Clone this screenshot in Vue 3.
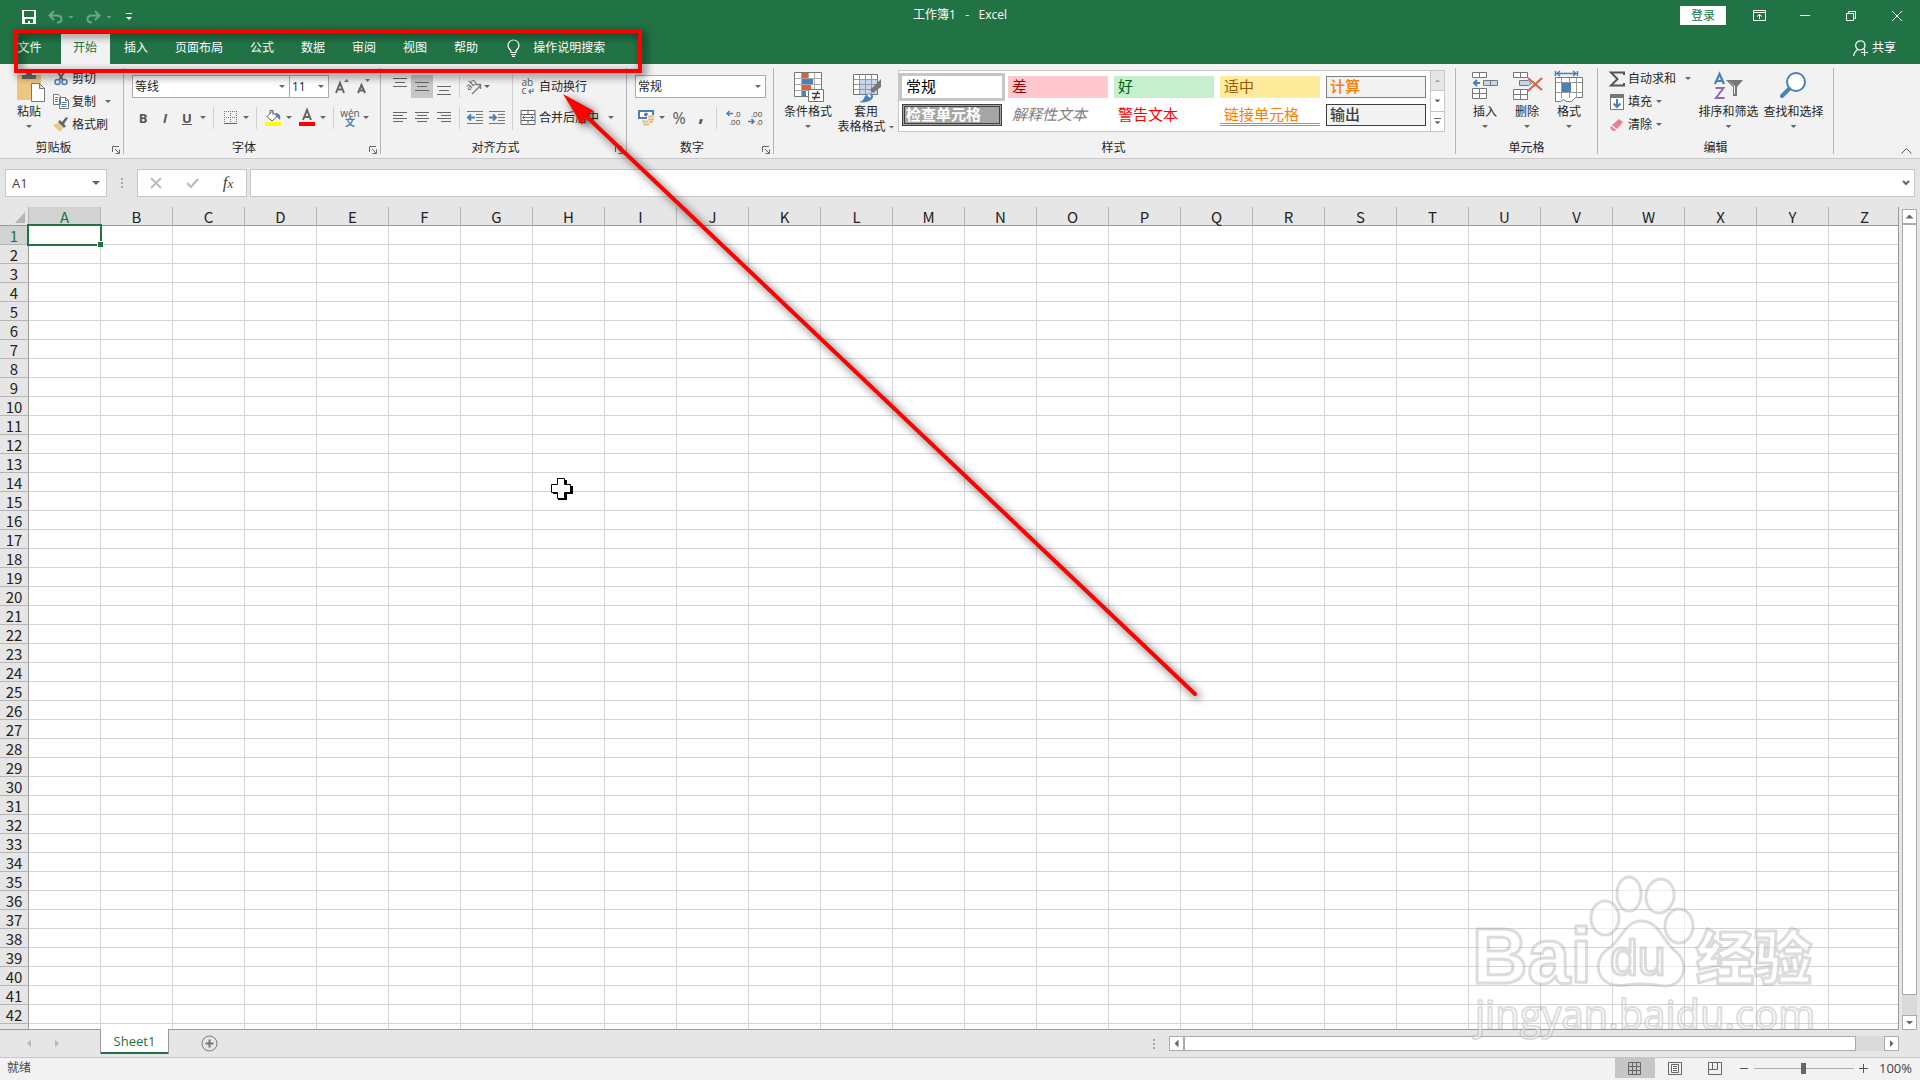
<script setup>
import { ref } from 'vue'

const tabs = ['文件', '开始', '插入', '页面布局', '公式', '数据', '审阅', '视图', '帮助']
const columns = 'ABCDEFGHIJKLMNOPQRSTUVWXYZ'.split('')
const rows = Array.from({ length: 43 }, (_, i) => i + 1)
const cellStyles = [
  { text: '常规', kind: 'normal' },
  { text: '差', kind: 'bad' },
  { text: '好', kind: 'good' },
  { text: '适中', kind: 'neutral' },
  { text: '计算', kind: 'calc' },
  { text: '检查单元格', kind: 'check' },
  { text: '解释性文本', kind: 'explain' },
  { text: '警告文本', kind: 'warn' },
  { text: '链接单元格', kind: 'linked' },
  { text: '输出', kind: 'output' }
]
const activeTab = ref('开始')
const cellName = ref('A1')
const formula = ref('')
const zoom = ref(50)
</script>

<template>
  <div class="app">
    <header class="top">
      <div class="titlebar">
        <div class="quick">
          <button class="qbtn" aria-label="保存">
            <svg width="14" height="14" viewBox="0 0 14 14"><path fill="#fff" fill-rule="evenodd" d="M0 0h14v14H0zM2 1v6h10V1zM3 9v4h3v-2h2v2h3V9z" /></svg>
          </button>
          <button class="qbtn dim" aria-label="撤消">
            <svg width="15" height="14" viewBox="0 0 15 14"><path fill="none" stroke="#fff" stroke-width="2" d="M6 1 1.500 5.500 6 10M2 5.500h7c6 0 6 7 0 7" /></svg>
            <i class="caret light"></i>
          </button>
          <button class="qbtn dim" aria-label="恢复">
            <svg width="15" height="14" viewBox="0 0 15 14"><path fill="none" stroke="#fff" stroke-width="2" d="M9 1l4.500 4.500L9 10M13 5.500H6c-6 0-6 7 0 7" /></svg>
            <i class="caret light"></i>
          </button>
          <button class="qbtn last" aria-label="自定义快速访问工具栏">
            <svg width="6" height="8" viewBox="0 0 6 8"><path fill="#fff" d="M0 0h6v1H0zM0 4h6L3 7z" /></svg>
          </button>
        </div>
        <h1 class="title">工作簿1&nbsp;&nbsp; -&nbsp;&nbsp; Excel</h1>
        <div class="window">
          <button class="login">登录</button>
          <button class="wbtn" aria-label="功能区显示选项">
            <svg width="13" height="11" viewBox="0 0 13 11"><path fill="none" stroke="#fff" d="M.5.5h12v10H.5zM.5 2.500h12M6.500 9V4.500M4 6.500l2.500-2 2.500 2" /></svg>
          </button>
          <button class="wbtn" aria-label="最小化">
            <svg width="10" height="2" viewBox="0 0 10 2"><path fill="#fff" d="M0 0h10v1H0z" /></svg>
          </button>
          <button class="wbtn" aria-label="向下还原">
            <svg width="10" height="10" viewBox="0 0 10 10"><path fill="none" stroke="#fff" d="M.5 2.500h7v7h-7zM2.500 2.500v-2h7v7h-2" /></svg>
          </button>
          <button class="wbtn" aria-label="关闭">
            <svg width="10" height="10" viewBox="0 0 10 10"><path fill="none" stroke="#fff" d="M0 0l10 10M10 0 0 10" /></svg>
          </button>
        </div>
      </div>

      <nav class="tabs">
        <button
          v-for="tab in tabs"
          :key="tab"
          class="tab"
          :class="{ active: tab === activeTab, file: tab === '文件' }"
          @click="activeTab = tab"
        >{{ tab }}</button>
        <button class="tell">
          <svg width="13" height="17" viewBox="0 0 13 17"><path fill="none" stroke="#fff" stroke-width="1.200" d="M4 12.500V11C3 9 1 8.500 1 5.500a5 5 0 0 1 11 0C12 8.500 10 9 9 11v1.500zM4 14.500h5M5 16.300h3" /></svg>
          操作说明搜索
        </button>
        <button class="share">
          <svg width="15" height="16" viewBox="0 0 15 16"><path fill="none" stroke="#fff" stroke-width="1.200" d="M7 .8a4.500 4.500 0 0 1 2 8.700L7.500 10A4.600 4.600 0 0 1 7 .8zM5 9.500C2.500 11 1 13 .7 16M11.500 9v7M8 12.500h7" /></svg>
          共享
        </button>
      </nav>
    </header>

    <section class="ribbon">
      <div class="group clipboard">
        <div class="body">
          <button class="big">
            <svg width="32" height="32" viewBox="0 0 32 32">
              <path fill="#eec77f" d="M4 4h24v25H4z" /><path fill="#6a6a6a" d="M9 8V4h4c0-5 6-5 6 0h4v4z" />
              <path fill="#fff" stroke="#777" d="M18.500 12.500h8l5 5v13h-13zM26.500 12.500v5h5" />
            </svg>
            <span>粘贴</span><i class="caret"></i>
          </button>
          <div class="stack">
            <button class="small">
              <svg width="14" height="15" viewBox="0 0 14 15"><path fill="none" stroke="#666" stroke-width="2" d="M3 0l6 9M11 0L5 9" /><g fill="none" stroke="#4a80b8" stroke-width="1.500"><circle cx="3.500" cy="11" r="2.500" /><circle cx="10.500" cy="11" r="2.500" /></g></svg>
              剪切
            </button>
            <button class="small">
              <svg width="16" height="15" viewBox="0 0 16 15"><path fill="#fff" stroke="#777" d="M.5.5h5l2 2v8h-7zM6.500 3.500h6l3 3v8h-9zM12.500 3.500v3h3" /><path stroke="#4a80b8" d="M2 3.500h3M2 5.500h3M2 7.500h3M8.500 8.500h5M8.500 10.500h5M8.500 12.500h5" /></svg>
              复制<i class="caret far"></i>
            </button>
            <button class="small">
              <svg width="16" height="15" viewBox="0 0 16 15"><path fill="#eec77f" d="M0 8l5-2 5 5-3 4z" /><path fill="#666" d="M5 5l2-2 6 6-2 2zM9 5l4-5 2 1-4 6z" /></svg>
              格式刷
            </button>
          </div>
        </div>
        <div class="label launch">剪贴板<button class="launcher" aria-label="剪贴板设置"><svg width="8" height="8" viewBox="0 0 8 8"><path fill="none" stroke="#666" d="M.5 6V.5H7M3 3l4 4M7.500 3.500v4h-4" /></svg></button></div>
      </div>

      <div class="group font">
        <div class="body lines">
          <div class="row">
            <label class="select family"><select aria-label="字体"><option>等线</option></select><i class="caret"></i></label>
            <label class="select size"><select aria-label="字号"><option>11</option></select><i class="caret"></i></label>
            <button class="tool grow" aria-label="增大字号"><svg width="14" height="15" viewBox="0 0 14 15"><path fill="none" stroke="#666" stroke-width="2" d="M1 14l4-10 4 10M3 10.500h4" /><path fill="#4a80b8" d="M9 3h5l-2.500-3z" /></svg></button>
            <button class="tool" aria-label="减小字号"><svg width="14" height="15" viewBox="0 0 14 15"><path fill="none" stroke="#666" stroke-width="2" d="M1 14l3.500-8L8 14M3 11.500h4" /><path fill="#4a80b8" d="M8 0h5l-2.500 3z" /></svg></button>
          </div>
          <div class="row">
            <button class="tool"><b>B</b></button>
            <button class="tool"><b><em>I</em></b></button>
            <button class="tool"><b><u>U</u></b></button><button class="drop" aria-label="下划线选项"><i class="caret"></i></button>
            <i class="sep"></i>
            <button class="tool" aria-label="边框"><svg width="13" height="14" viewBox="0 0 13 14"><path fill="none" stroke="#777" stroke-dasharray="1 1" d="M.5 0v12M6.500 0v12M12.500 0v12M0 .5h13M0 6.500h13" /><path fill="#666" d="M0 12h13v1H0z" /></svg></button><button class="drop" aria-label="边框选项"><i class="caret"></i></button>
            <i class="sep"></i>
            <button class="tool" aria-label="填充颜色"><svg width="16" height="17" viewBox="0 0 16 17"><path fill="#fff" stroke="#666" d="M7 2.500l5 5-5 4.500-5-4.500zM5 5V1.500h3V6" /><path fill="#4a80b8" d="M10 4c4 0 6 2 5 7l-3-3z" /><path fill="#ff0" d="M0 13h16v4H0z" /></svg></button><button class="drop" aria-label="填充颜色选项"><i class="caret"></i></button>
            <button class="tool fore" aria-label="字体颜色"><svg width="16" height="17" viewBox="0 0 16 17"><path fill="none" stroke="#666" stroke-width="2" d="M4 11L8 1l4 10M5.500 8h5" /><path fill="red" d="M0 13h16v4H0z" /></svg></button><button class="drop" aria-label="字体颜色选项"><i class="caret"></i></button>
            <i class="sep"></i>
            <button class="tool pinyin"><span>wén</span><span class="wen">文</span></button><button class="drop" aria-label="拼音选项"><i class="caret"></i></button>
          </div>
        </div>
        <div class="label launch">字体<button class="launcher" aria-label="字体设置"><svg width="8" height="8" viewBox="0 0 8 8"><path fill="none" stroke="#666" d="M.5 6V.5H7M3 3l4 4M7.500 3.500v4h-4" /></svg></button></div>
      </div>

      <div class="group align">
        <div class="body">
          <div class="lines">
            <div class="row">
              <button class="tool" aria-label="顶端对齐"><svg width="14" height="17" viewBox="0 0 14 17"><path stroke="#666" d="M0 .5h14M2 4.500h10M0 8.500h14" /></svg></button>
              <button class="tool on" aria-label="垂直居中"><svg width="14" height="9" viewBox="0 0 14 9"><path stroke="#666" d="M0 .5h14M2 4.500h10M0 8.500h14" /></svg></button>
              <button class="tool" aria-label="底端对齐"><svg width="14" height="17" viewBox="0 0 14 17"><path stroke="#666" d="M0 8.500h14M2 12.500h10M0 16.500h14" /></svg></button>
              <i class="sep"></i>
              <button class="tool slim" aria-label="方向"><svg width="17" height="16" viewBox="0 0 17 16"><text x="4" y="12" transform="rotate(-45 4 12)" class="glyph">ab</text><path fill="none" stroke="#777" stroke-width="1.300" d="M7 15l8-8M11 5.500h4.500V10" /></svg></button><button class="drop" aria-label="方向选项"><i class="caret"></i></button>
            </div>
            <div class="row">
              <button class="tool" aria-label="左对齐"><svg width="14" height="11" viewBox="0 0 14 11"><path stroke="#666" d="M0 .5h14M0 3.500h10M0 6.500h14M0 9.500h10" /></svg></button>
              <button class="tool" aria-label="居中"><svg width="14" height="11" viewBox="0 0 14 11"><path stroke="#666" d="M0 .5h14M2 3.500h10M0 6.500h14M2 9.500h10" /></svg></button>
              <button class="tool" aria-label="右对齐"><svg width="14" height="11" viewBox="0 0 14 11"><path stroke="#666" d="M0 .5h14M4 3.500h10M0 6.500h14M4 9.500h10" /></svg></button>
              <i class="sep"></i>
              <button class="tool" aria-label="减少缩进量"><svg width="16" height="13" viewBox="0 0 16 13"><path stroke="#777" d="M0 .5h16M9 3.500h7M9 6.500h7M9 9.500h7M0 12.500h16" /><path fill="none" stroke="#4a80b8" stroke-width="2" d="M8 6.500H1.500M4 3.500l-3 3 3 3" /></svg></button>
              <button class="tool" aria-label="增加缩进量"><svg width="16" height="13" viewBox="0 0 16 13"><path stroke="#777" d="M0 .5h16M9 3.500h7M9 6.500h7M9 9.500h7M0 12.500h16" /><path fill="none" stroke="#4a80b8" stroke-width="2" d="M0 6.500h6.500M4 3.500l3 3-3 3" /></svg></button>
            </div>
          </div>
          <i class="sep tall"></i>
          <div class="lines">
            <button class="small">
              <svg width="13" height="16" viewBox="0 0 13 16"><text x="0" y="7" class="glyph">ab</text><text x="0" y="15" class="glyph">c</text><path fill="none" stroke="#4a80b8" stroke-width="1.200" d="M11.500 9.500v3H8M9.500 10.500l-2 2 2 2" /></svg>
              自动换行
            </button>
            <button class="small">
              <svg width="15" height="15" viewBox="0 0 15 15"><path fill="#fff" stroke="#666" d="M.5.5h14v14H.5zM.5 4.500h14M.5 10.500h14M7.500.5v4M7.500 10.500v4" /><path fill="none" stroke="#4a80b8" d="M2 7.500h11M4 5.500l-2 2 2 2M11 5.500l2 2-2 2" /></svg>
              合并后居中<i class="caret far"></i>
            </button>
          </div>
        </div>
        <div class="label launch">对齐方式<button class="launcher" aria-label="对齐设置"><svg width="8" height="8" viewBox="0 0 8 8"><path fill="none" stroke="#666" d="M.5 6V.5H7M3 3l4 4M7.500 3.500v4h-4" /></svg></button></div>
      </div>

      <div class="group number">
        <div class="body lines">
          <div class="row">
            <label class="select format"><select aria-label="数字格式"><option>常规</option></select><i class="caret"></i></label>
          </div>
          <div class="row">
            <button class="tool" aria-label="会计数字格式"><svg width="16" height="17" viewBox="0 0 16 17"><path fill="#fff" stroke="#4a80b8" stroke-width="2" d="M1 2h14v7H1z" /><circle cx="8" cy="5.500" r="2" fill="#4a80b8" /><path fill="#f2f2f2" d="M9 6h7v6H9zM4 11h7v5H4z" /><path stroke="#e8bd7a" stroke-width="1.800" d="M10 7.500h6M10 10.500h6M4 12.500h6M5 15.500h6M11 13h4" /></svg></button><button class="drop" aria-label="会计格式选项"><i class="caret"></i></button>
            <button class="tool percent">%</button>
            <button class="tool comma"><b>,</b></button>
            <i class="sep"></i>
            <button class="tool" aria-label="增加小数位数"><svg width="15" height="15" viewBox="0 0 15 15"><path fill="none" stroke="#4a80b8" stroke-width="1.500" d="M7 3.500H1M3.500 1L1 3.500 3.500 6" /><text x="8" y="7" class="digits">.0</text><text x="3" y="15" class="digits">.00</text></svg></button>
            <button class="tool" aria-label="减少小数位数"><svg width="15" height="15" viewBox="0 0 15 15"><path fill="none" stroke="#4a80b8" stroke-width="1.500" d="M0 11.500h6M3.500 9L6 11.500 3.500 14" /><text x="3" y="7" class="digits">.00</text><text x="8" y="15" class="digits">.0</text></svg></button>
          </div>
        </div>
        <div class="label launch">数字<button class="launcher" aria-label="数字设置"><svg width="8" height="8" viewBox="0 0 8 8"><path fill="none" stroke="#666" d="M.5 6V.5H7M3 3l4 4M7.500 3.500v4h-4" /></svg></button></div>
      </div>

      <div class="group styles">
        <div class="body">
          <button class="big cond">
            <svg width="32" height="32" viewBox="0 0 32 32">
              <path fill="#fff" stroke="#777" d="M2.500 1.500h27v24h-27z" /><path stroke="#aaa" d="M3 7.500h26M3 13.500h26M3 19.500h26M9.500 2v23M16.500 2v23M22.500 2v23" />
              <path fill="#d9603b" d="M10 2h6v5h-6zM10 14h9v5h-9z" /><path fill="#4a80b8" d="M10 8h11v5H10zM10 20h4v5h-4z" />
              <path fill="#fff" stroke="#777" d="M16.500 18.500h15v12h-15z" /><path stroke="#444" stroke-width="1.300" d="M20 22.500h8M20 26.500h8M26 20l-4 9" />
            </svg>
            <span>条件格式</span><i class="caret"></i>
          </button>
          <button class="big wide">
            <svg width="32" height="32" viewBox="0 0 32 32">
              <path fill="#fff" stroke="#777" d="M3.500 3.500h24v20h-24z" /><path fill="#c3d6ec" d="M10 9h17v14H10z" /><path stroke="#999" d="M4 8.500h23M4 13.500h23M4 18.500h23M9.500 4v19M15.500 4v19M21.500 4v19" />
              <path fill="#777" d="M31 8v8l-8 6-3-3z" /><path fill="#4a80b8" d="M9 31c6-1 4-5 8-8 6-2 8 3 4 6-3 2-8 3-12 2z" /><path fill="#fff" d="M17 24c3-2 5 1 3 3z" />
            </svg>
            <span>套用</span><span class="second">表格格式<i class="caret"></i></span>
          </button>
          <div class="gallery">
            <div class="swatches">
              <button v-for="s in cellStyles" :key="s.kind" class="swatch" :class="s.kind">{{ s.text }}</button>
            </div>
            <div class="pager">
              <button class="off" aria-label="上一行"><i class="caret up"></i></button>
              <button aria-label="下一行"><i class="caret"></i></button>
              <button class="more" aria-label="其他"><i class="caret"></i></button>
            </div>
          </div>
        </div>
        <div class="label">样式</div>
      </div>

      <div class="group cells">
        <div class="body">
          <button class="big">
            <svg width="32" height="32" viewBox="0 0 32 32"><path fill="#fff" stroke="#777" d="M3.500 1.500h14v5h-14zM10.500 1.500v5M3.500 17.500h14v10h-14zM3.500 22.500h14M10.500 17.500v10" /><path fill="#c3d6ec" stroke="#777" d="M14.500 9.500h14v5h-14zM21.500 9.500v5" /><path fill="none" stroke="#4a80b8" stroke-width="2" d="M11 12H5M8 9l-3 3 3 3" /></svg>
            <span>插入</span><i class="caret"></i>
          </button>
          <button class="big">
            <svg width="32" height="32" viewBox="0 0 32 32"><path fill="#fff" stroke="#777" d="M2.500 1.500h14v5h-14zM9.500 1.500v5M2.500 18.500h14v10h-14zM2.500 23.500h14M9.500 18.500v10" /><path fill="#c3d6ec" stroke="#777" d="M8.500 9.500h9l3 3-3 2h-9z" /><path fill="none" stroke="#d9603b" stroke-width="2" d="M17 7l14 12M31 7L17 20" /></svg>
            <span>删除</span><i class="caret"></i>
          </button>
          <button class="big">
            <svg width="32" height="32" viewBox="0 0 32 32"><path fill="none" stroke="#4a80b8" stroke-width="1.500" d="M2.500 0v5M24.500 0v5M4 2.500h19M7 0L4 2.500 7 5M20 0l3 2.500L20 5" /><path fill="#fff" stroke="#777" d="M2.500 6.500h27v20h-7l-4 4h-5l-3-2-3 2h-5z" /><path stroke="#999" d="M3 11.500h26M3 21.500h26M8.500 7v20M16.500 7v20M23.500 7v20" /><path fill="#4a80b8" d="M9 12h9v9H9z" /></svg>
            <span>格式</span><i class="caret"></i>
          </button>
        </div>
        <div class="label">单元格</div>
      </div>

      <div class="group editing">
        <div class="body">
          <div class="stack">
            <button class="small">
              <svg width="16" height="16" viewBox="0 0 16 16"><path fill="none" stroke="#555" stroke-width="2" d="M15 4V1.500H2L8.500 8 2 14.500h13V12" /></svg>
              自动求和<i class="caret far"></i>
            </button>
            <button class="small">
              <svg width="14" height="16" viewBox="0 0 14 16"><path fill="#fff" stroke="#777" d="M.5.500h13v15H.5z" /><path fill="#777" d="M0 0h14v4H0z" /><path fill="none" stroke="#4a80b8" stroke-width="2" d="M7 5v8M3.500 9.500L7 13l3.500-3.500" /></svg>
              填充<i class="caret near"></i>
            </button>
            <button class="small">
              <svg width="14" height="14" viewBox="0 0 14 14"><path fill="#e88193" d="M9 1l4 3-6 7-5-4zM1 8l5 4-1 1H3L0 10z" /></svg>
              清除<i class="caret near"></i>
            </button>
          </div>
          <button class="big sort">
            <svg width="32" height="32" viewBox="0 0 32 32"><path fill="none" stroke="#4a80b8" stroke-width="2.200" d="M2 13L6.500 3 11 13M3.500 10h6" /><path fill="none" stroke="#9764b8" stroke-width="2" d="M2.500 17h8L3 27h8.500" /><path fill="#777" d="M13 9h17l-6 7v9h-4v-9z" /><path fill="#f2f2f2" d="M16 10l5 5v8h1v-8z" /></svg>
            <span>排序和筛选</span><i class="caret"></i>
          </button>
          <button class="big sort">
            <svg width="32" height="32" viewBox="0 0 32 32"><circle cx="18" cy="11" r="9" fill="#fff" stroke="#4a80b8" stroke-width="2" /><path stroke="#4a80b8" stroke-width="4" stroke-linecap="round" d="M11 18l-7 7" /></svg>
            <span>查找和选择</span><i class="caret"></i>
          </button>
        </div>
        <div class="label">编辑</div>
      </div>
      <button class="collapse" aria-label="折叠功能区"><svg width="11" height="6" viewBox="0 0 11 6"><path fill="none" stroke="#555" d="M.5 5.500l5-5 5 5" /></svg></button>
    </section>

    <section class="formula">
      <div class="namebox"><input v-model="cellName" aria-label="名称框" /><i class="caret big-caret"></i></div>
      <i class="grip"></i>
      <div class="fx">
        <button aria-label="取消"><svg width="12" height="10" viewBox="0 0 12 10"><path stroke="#bbb" stroke-width="1.800" d="M1 0l10 10M11 0L1 10" /></svg></button>
        <button aria-label="输入"><svg width="13" height="10" viewBox="0 0 13 10"><path fill="none" stroke="#bbb" stroke-width="2.200" d="M1 5l4 4 7-8" /></svg></button>
        <button class="fn"><em>f<small>x</small></em></button>
      </div>
      <div class="bar">
        <input v-model="formula" aria-label="编辑栏" />
        <button aria-label="展开编辑栏"><svg width="8" height="6" viewBox="0 0 8 6"><path fill="none" stroke="#666" stroke-width="2" d="M1 1l3 3 3-3" /></svg></button>
      </div>
    </section>

    <main class="sheet">
      <div class="viewport">
        <table>
          <thead>
            <tr>
              <th class="corner"><svg width="10" height="11" viewBox="0 0 10 11"><path fill="#b5b5b5" d="M10 0v11H0z" /></svg></th>
              <th v-for="c in columns" :key="c" scope="col" :class="{ current: c === 'A' }">{{ c }}</th>
            </tr>
          </thead>
          <tbody>
            <tr v-for="r in rows" :key="r">
              <th scope="row" :class="{ current: r === 1 }">{{ r }}</th>
              <td v-for="c in columns" :key="c"><span v-if="r === 1 && c === 'A'" class="selection"></span></td>
            </tr>
          </tbody>
        </table>
      </div>
      <div class="vscroll">
        <button aria-label="向上滚动"><i class="tri up"></i></button>
        <div class="thumb"></div>
        <button aria-label="向下滚动"><i class="tri down"></i></button>
      </div>
    </main>

    <footer>
      <div class="sheetbar">
        <div class="nav">
          <button aria-label="上一个工作表"><i class="tri left faint"></i></button>
          <button aria-label="下一个工作表"><i class="tri right faint"></i></button>
        </div>
        <button class="sheettab">Sheet1</button>
        <button class="add" aria-label="新工作表"><svg width="17" height="17" viewBox="0 0 17 17"><circle cx="8.500" cy="8.500" r="7.500" fill="none" stroke="#777" /><path stroke="#777" stroke-width="2" d="M8.500 4.500v8M4.500 8.500h8" /></svg></button>
        <i class="grip"></i>
        <div class="hscroll">
          <button aria-label="向左滚动"><i class="tri left"></i></button>
          <div class="thumb"></div>
          <button aria-label="向右滚动"><i class="tri right"></i></button>
        </div>
      </div>
      <div class="status">
        <span>就绪</span>
        <div class="views">
          <button class="on" aria-label="普通"><svg width="13" height="13" viewBox="0 0 13 13"><path fill="none" stroke="#666" d="M.5.500h12v12H.5zM.5 4.500h12M.5 8.500h12M4.500.5v12M8.500.5v12" /></svg></button>
          <button aria-label="页面布局视图"><svg width="14" height="13" viewBox="0 0 14 13"><path fill="none" stroke="#666" d="M.5.500h13v12H.5zM3.500 2.500h7v8h-7zM5 4.500h4M5 6.500h4M5 8.500h4" /></svg></button>
          <button aria-label="分页预览"><svg width="14" height="13" viewBox="0 0 14 13"><path fill="none" stroke="#666" d="M.5.500h13v12H.5zM4.500.5v7M9.500.5v7M.5 7.500h9" /></svg></button>
        </div>
        <button class="step" aria-label="缩小"><svg width="9" height="9" viewBox="0 0 9 9"><path stroke="#555" d="M0 4.500h8" /></svg></button>
        <input v-model="zoom" class="zoom" type="range" min="0" max="100" aria-label="缩放" />
        <button class="step" aria-label="放大"><svg width="9" height="9" viewBox="0 0 9 9"><path stroke="#555" d="M0 4.500h9M4.500 0v9" /></svg></button>
        <button class="level">100%</button>
      </div>
    </footer>

    <svg class="watermark" width="360" height="170" viewBox="0 0 360 170">
      <text x="2" y="115" class="latin">Bai</text>
      <g class="paw">
        <ellipse cx="135" cy="50" rx="14" ry="17" />
        <ellipse cx="159" cy="26" rx="12" ry="17" />
        <ellipse cx="190" cy="28" rx="14" ry="17" transform="rotate(10 190 28)" />
        <ellipse cx="209" cy="58" rx="14" ry="17" />
        <path d="M171 53c18 0 20 18 34 30 16 12 9 36-11 35-14-1-20-4-38-1-30 5-35-25-18-36 13-8 17-28 33-28z" />
      </g>
      <text x="140" y="107" class="du">du</text>
      <text x="226" y="111" class="hanzi">经验</text>
      <text x="5" y="161" class="site">jingyan.baidu.com</text>
    </svg>

    <svg class="pointer" width="22" height="22" viewBox="0 0 22 22">
      <path d="M8 2h8v6h6v8h-6v6H7v-6H2V8h6z" /><path fill="#fff" stroke="#000" d="M6.500.5h7v6h6v8h-6v6h-7v-6h-6v-8h6z" />
    </svg>

    <svg class="annotation" width="1220" height="720" viewBox="0 0 1220 720">
      <path fill="none" stroke="red" stroke-width="4" d="M16 31h624v40H16z" />
      <path stroke="red" stroke-width="4" stroke-linecap="round" d="M584 114l611 580" />
      <path fill="red" d="M563 94l31 17-8 4-4 10z" />
    </svg>
  </div>
</template>

<style>
body {
  margin: 0;
  overflow: hidden;
}
</style>

<style scoped>
.app {
  position: relative;
  display: flex;
  flex-direction: column;
  height: 100vh;
  overflow: hidden;
  background: #e6e6e6;
  color: #262626;
  font: 12px/16px "Open Sans", "Noto Sans CJK SC", sans-serif;
}
*, *::before, *::after { box-sizing: border-box; }
svg { display: block; flex: none; overflow: visible; }
button, input, select { font: inherit; color: inherit; margin: 0; padding: 0; border: 0; background: none; border-radius: 0; outline: none; }
button { display: flex; align-items: center; justify-content: center; white-space: nowrap; flex: none; }
i { font-style: normal; flex: none; }
.caret { width: 6px; height: 3px; background: #666; clip-path: polygon(0 0, 100% 0, 50% 100%); }
.caret.light { background: #fff; }
.caret.up { background: #aaa; clip-path: polygon(0 100%, 50% 0, 100% 100%); }
.caret.far { margin-left: 9px; }
.caret.near { margin-left: 4px; }

.top { background: #217346; color: #fff; }
.titlebar { display: grid; grid-template-columns: 1fr auto 1fr; height: 34px; padding-bottom: 3px; }
.quick { display: flex; align-items: center; gap: 12px; padding: 3px 0 0 22px; }
.qbtn { gap: 5px; }
.qbtn.dim { opacity: 0.35; }
.qbtn.last { margin-left: 2px; }
.title { margin: 0; font-size: 12px; font-weight: 400; line-height: 30px; }
.window { display: flex; justify-content: flex-end; align-items: center; }
.login { width: 46px; height: 19px; margin-right: 10px; background: #fff; color: #217346; }
.wbtn { width: 46px; height: 30px; }
.tabs { display: flex; height: 30px; }
.tab { margin-right: 2px; padding: 0 13px 2px 12px; }
.tab.file { width: 59px; padding: 0 0 2px; }
.tab.active { background: #f2f2f2; color: #217346; }
.tell { gap: 13px; padding: 0 14px 2px; }
.share { gap: 4px; margin-left: auto; padding: 0 24px 2px; }

.ribbon { display: flex; height: 95px; padding: 4px 0; background: #f2f2f2; border-bottom: 1px solid #c8c8c8; flex: none; }
.group { display: flex; flex-direction: column; flex: none; height: 86px; padding-left: 8px; border-right: 1px solid #b5b5b5; }
.clipboard { width: 124px; }
.font { width: 257px; }
.align { width: 246px; }
.number { width: 147px; }
.styles { width: 682px; padding-left: 6px; }
.cells { width: 142px; }
.editing { width: 236px; }
.body { display: flex; height: 70px; flex: none; }
.label { display: flex; justify-content: center; height: 16px; margin-left: -8px; line-height: 20px; }
.label.launch { position: relative; padding-right: 16px; }
.launcher { position: absolute; right: 3px; bottom: 0; }
.lines { display: flex; flex-direction: column; gap: 8px; padding-top: 7px; }
.lines > * { height: 23px; }
.row { display: flex; align-items: center; }
.stack { display: flex; flex-direction: column; align-items: flex-start; margin-top: -1px; }
.small { height: 23px; justify-content: flex-start; }
.small > svg { width: 22px; }
.big { flex-direction: column; justify-content: flex-start; width: 42px; padding-top: 3px; line-height: 16px; }
.big > svg { margin-bottom: 1px; }
.big > .caret { margin-top: 5px; }
.big.cond { width: 56px; }
.big.wide { width: 60px; }
.second { display: flex; align-items: center; gap: 3px; line-height: 14px; }
.tool { width: 22px; height: 23px; font-size: 13px; color: #555; }
.tool.on { background: #c6c6c6; }
.tool.slim { width: 18px; }
.tool.grow { margin-left: 2px; }
.tool.fore { margin-left: 2px; }
.drop { width: 10px; height: 23px; }
.percent { width: 24px; font-size: 16px; }
.comma { width: 20px; padding-bottom: 8px; font-size: 20px; }
.pinyin { flex-direction: column; font-size: 10px; line-height: 9px; }
.wen { color: #4a80b8; font-weight: 700; }
.glyph { font-size: 10px; fill: #555; }
.digits { font-size: 8px; fill: #444; }
.sep { width: 1px; height: 22px; margin: 0 5px; background: #d0d0d0; }
.align .row .sep { margin: 0 4px; }
.sep.tall { height: 56px; margin: 6px 4px 0; }
.select { position: relative; display: flex; height: 23px; background: #fff; border: 1px solid #ababab; }
.select select { width: 100%; padding-left: 2px; appearance: none; }
.select .caret { position: absolute; right: 4px; top: 9px; }
.family { width: 158px; }
.size { width: 40px; margin-left: -1px; }
.format { width: 131px; }

.gallery { display: flex; height: 62px; margin: 2px 0 0 2px; border: 1px solid #c6c6c6; background: #fff; }
.swatches { display: grid; grid-template-columns: repeat(5, 100px); grid-auto-rows: 22px; gap: 6px; padding: 5px 4px 5px 3px; }
.swatch { justify-content: flex-start; padding: 0 0 2px 4px; font-size: 15px; line-height: 18px; }
.normal { box-shadow: 0 0 0 3px #c6c6c6; color: #000; }
.bad { background: #ffc7ce; color: #9c0006; }
.good { background: #c6efce; color: #006100; }
.neutral { background: #ffeb9c; color: #9c5700; }
.calc { background: #f2f2f2; border: 1px solid #7f7f7f; color: #fa7d00; font-weight: 500; padding-left: 3px; }
.check { background: #a5a5a5; border: 3px double #3f3f3f; color: #fff; font-weight: 700; padding-left: 1px; }
.explain { color: #7f7f7f; font-style: italic; }
.warn { color: #ff0000; }
.linked { border-bottom: 3px double #ff8001; color: #fa7d00; padding-bottom: 0; }
.output { background: #f2f2f2; border: 1px solid #3f3f3f; color: #3f3f3f; font-weight: 500; padding-left: 3px; }
.pager { display: flex; flex-direction: column; width: 14px; border-left: 1px solid #c6c6c6; }
.pager button { flex: 1; }
.pager button + button { border-top: 1px solid #c6c6c6; }
.pager .off { background: #e6e6e6; }
.more { flex-direction: column; gap: 2px; }
.more::before { content: ""; width: 7px; height: 1px; background: #666; }
.editing .stack { width: 90px; }
.big.sort { width: 65px; }
.collapse { margin-left: auto; align-self: flex-end; padding-right: 8px; }

.formula { display: flex; align-items: center; height: 48px; padding: 10px 5px; flex: none; color: #444; }
.namebox, .fx, .bar { display: flex; align-items: center; height: 28px; background: #fff; border: 1px solid #c6c6c6; }
.namebox { width: 102px; padding: 0 6px; font-size: 13px; }
.namebox input { flex: 1; min-width: 0; }
.big-caret { width: 8px; height: 4px; }
.grip { width: 2px; height: 10px; margin: 0 14px; background: repeating-linear-gradient(#aaa 0 2px, transparent 2px 4px); }
.fx { width: 110px; margin-right: 3px; }
.fx button { width: 36px; }
.fn { font: italic 17px/20px "Liberation Serif", serif; color: #444; }
.fn small { font-size: 13px; }
.bar { flex: 1; padding-right: 4px; }
.bar input { flex: 1; padding: 0 6px; }

.sheet { display: flex; flex: 1; min-height: 0; }
.viewport { flex: 1; min-width: 0; overflow: hidden; border: solid #999; border-width: 0 1px 1px 0; }
table { width: 1901px; table-layout: fixed; border-spacing: 0; background: #fff; font: 15px/16px "Noto Sans CJK SC", sans-serif; color: #222; }
th, td { width: 72px; height: 19px; padding: 0; border: solid #d4d4d4; border-width: 0 1px 1px 0; font-weight: 400; text-align: center; }
th { padding-top: 2px; background: #e6e6e6; border-color: #b5b5b5; }
thead th { border-bottom-color: #999; }
tbody th { border-right-color: #999; }
th.current { background: #d2d2d2; color: #217346; }
.corner { width: 29px; }
.corner svg { margin-left: 15px; }
td { position: relative; }
.selection { position: absolute; inset: -2px; border: 2px solid #217346; z-index: 1; }
.selection::after { content: ""; position: absolute; right: -3px; bottom: -3px; width: 6px; height: 6px; background: #217346; border: solid #fff; border-width: 1px 0 0 1px; }
.vscroll { display: flex; flex-direction: column; width: 15px; margin: 2px 3px 0; background: #dadada; flex: none; }
.vscroll button, .hscroll button { width: 15px; height: 15px; background: #fff; border: 1px solid #ababab; }
.vscroll .thumb { flex: 1; margin-bottom: 20px; background: #fff; border: 1px solid #ababab; }
.tri { width: 8px; height: 4px; background: #666; }
.tri.up { clip-path: polygon(0 100%, 50% 0, 100% 100%); }
.tri.down { clip-path: polygon(0 0, 100% 0, 50% 100%); }
.tri.left { width: 4px; height: 8px; clip-path: polygon(100% 0, 0 50%, 100% 100%); }
.tri.right { width: 4px; height: 8px; clip-path: polygon(0 0, 100% 50%, 0 100%); }
.tri.faint { background: #bbb; }

footer { flex: none; }
.sheetbar { display: flex; align-items: center; height: 28px; padding-right: 21px; border-bottom: 1px solid #c6c6c6; }
.nav { display: flex; gap: 24px; width: 100px; padding-left: 27px; }
.sheettab { align-self: flex-start; width: 69px; height: 25px; margin-top: -1px; padding-bottom: 2px; background: #fff; border: solid #999; border-width: 0 1px; box-shadow: inset 0 -2px #217346; color: #217346; font-size: 13px; z-index: 1; }
.add { margin: 0 auto 0 32px; }
.hscroll { display: flex; flex: 0 1 730px; background: #dadada; }
.hscroll .thumb { flex: 1; height: 15px; margin-right: 28px; background: #fff; border: 1px solid #ababab; }
.status { display: flex; align-items: center; height: 22px; padding: 0 8px 2px 7px; background: #f2f2f2; color: #444; }
.views { display: flex; margin-left: auto; }
.views button { width: 40px; height: 20px; }
.views .on { background: #c6c6c6; }
.step { width: 19px; height: 20px; }
.zoom { width: 100px; height: 12px; appearance: none; background: linear-gradient(#aaa, #aaa) center / 100% 1px no-repeat; }
.zoom::-webkit-slider-thumb { appearance: none; width: 5px; height: 11px; background: #666; }
.level { margin-left: 6px; font-size: 13px; }

.watermark { position: absolute; right: 90px; bottom: 42px; pointer-events: none; fill: rgba(255, 255, 255, 0.6); stroke: rgba(140, 140, 140, 0.3); stroke-width: 3px; stroke-linejoin: round; }
.latin { font: bold 77px "Liberation Sans", sans-serif; }
.du { font: 50px "Liberation Sans", sans-serif; }
.hanzi { font: 900 58px "Noto Sans CJK SC", sans-serif; }
.site { font: 40px "Open Sans", sans-serif; stroke-width: 2px; }
.pointer { position: absolute; left: 551px; top: 478px; pointer-events: none; }
.annotation { position: absolute; left: 0; top: 0; pointer-events: none; filter: drop-shadow(3px 3px 4px rgba(0, 0, 0, 0.7)); }
</style>
